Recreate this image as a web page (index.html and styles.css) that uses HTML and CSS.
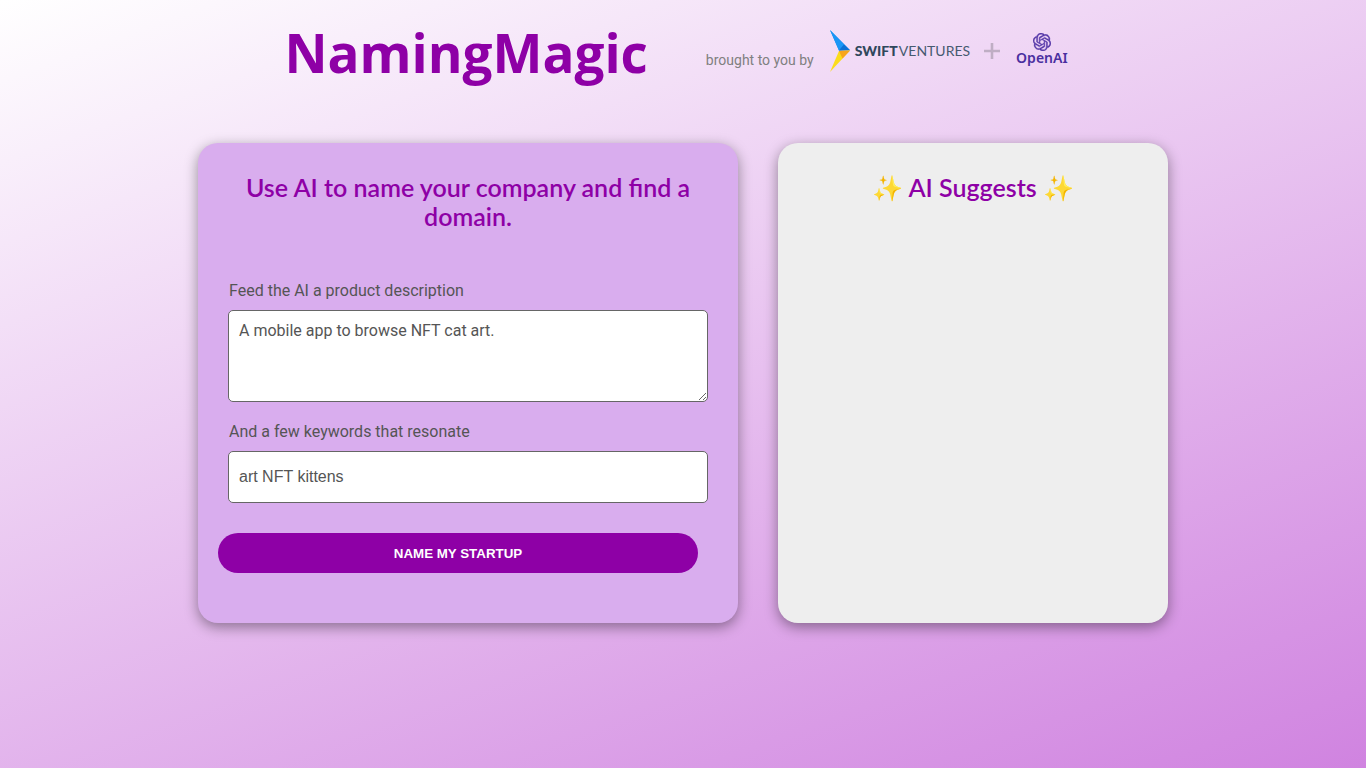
FILE: index.html
```html
<!DOCTYPE html>
<html lang="en">
<head>
    <meta charset="UTF-8">
    <meta name="viewport" content="width=device-width, initial-scale=1.0">
    <title>NamingMagic</title>
    <link rel="stylesheet" href="styles.css">
</head>
<body>

    <header class="header">
        <h1 class="title">NamingMagic</h1>
        <div class="sponsors">
            <span class="brought">brought to you by</span>
            <a class="swift" href="#">
                <svg class="swift-mark" viewBox="0 0 20 42" aria-hidden="true">
                    <polygon points="0,0 20,20 9,20.5" fill="#0b84ee"/>
                    <polygon points="0,0 14,14.5 9,20.5" fill="#1a96f5"/>
                    <polygon points="9,20.5 14,14.5 20,20.5" fill="#0b70d4"/>
                    <polygon points="0,42 9,21 20,20.5" fill="#fbdc1c"/>
                    <polygon points="9,21 20,20.5 12.5,28.5" fill="#f7a51c"/>
                </svg>
                <span class="swift-name"><strong>SWIFT</strong> VENTURES</span>
            </a>
            <svg class="plus" viewBox="0 0 16 16" aria-hidden="true">
                <path d="M8 0V16M0 8H16" stroke="#bfaec4" stroke-width="2.6" fill="none"/>
            </svg>
            <a class="openai" href="#">
                <svg class="openai-mark" viewBox="0 0 24 24" aria-hidden="true">
                    <path fill="#5538a8" stroke="#5538a8" stroke-width="0.5" d="M22.2819 9.8211a5.9847 5.9847 0 0 0-.5157-4.9108 6.0462 6.0462 0 0 0-6.5098-2.9A6.0651 6.0651 0 0 0 4.9807 4.1818a5.9847 5.9847 0 0 0-3.9977 2.9 6.0462 6.0462 0 0 0 .7427 7.0966 5.98 5.98 0 0 0 .511 4.9107 6.051 6.051 0 0 0 6.5146 2.9001A5.9847 5.9847 0 0 0 13.2599 24a6.0557 6.0557 0 0 0 5.7718-4.2058 5.9894 5.9894 0 0 0 3.9977-2.9001 6.0557 6.0557 0 0 0-.7475-7.0729zm-9.022 12.6081a4.4755 4.4755 0 0 1-2.8764-1.0408l.1419-.0804 4.7783-2.7582a.7948.7948 0 0 0 .3927-.6813v-6.7369l2.02 1.1686a.071.071 0 0 1 .038.052v5.5826a4.504 4.504 0 0 1-4.4945 4.4944zm-9.6607-4.1254a4.4708 4.4708 0 0 1-.5346-3.0137l.142.0852 4.783 2.7582a.7712.7712 0 0 0 .7806 0l5.8428-3.3685v2.3324a.0804.0804 0 0 1-.0332.0615L9.74 19.9502a4.4992 4.4992 0 0 1-6.1408-1.6464zM2.3408 7.8956a4.485 4.485 0 0 1 2.3655-1.9728V11.6a.7664.7664 0 0 0 .3879.6765l5.8144 3.3543-2.0201 1.1685a.0757.0757 0 0 1-.071 0l-4.8303-2.7865A4.504 4.504 0 0 1 2.3408 7.872zm16.5963 3.8558L13.1038 8.364 15.1192 7.2a.0757.0757 0 0 1 .071 0l4.8303 2.7913a4.4944 4.4944 0 0 1-.6765 8.1042v-5.6772a.79.79 0 0 0-.407-.667zm2.0107-3.0231l-.142-.0852-4.7735-2.7818a.7759.7759 0 0 0-.7854 0L9.409 9.2297V6.8974a.0662.0662 0 0 1 .0284-.0615l4.8303-2.7866a4.4992 4.4992 0 0 1 6.6802 4.66zM8.3065 12.863l-2.02-1.1638a.0804.0804 0 0 1-.038-.0567V6.0742a4.4992 4.4992 0 0 1 7.3757-3.4537l-.142.0805L8.704 5.459a.7948.7948 0 0 0-.3927.6813zm1.0976-2.3654l2.602-1.4998 2.6069 1.4998v2.9994l-2.5974 1.4997-2.6067-1.4997Z"/>
                </svg>
                <span class="openai-name">OpenAI</span>
            </a>
        </div>
    </header>

    <main class="cards">
        <section class="card form-card">
            <h2>Use AI to name your company and find a domain.</h2>
            <form>
                <label for="description">Feed the AI a product description</label>
                <textarea id="description">A mobile app to browse NFT cat art.</textarea>
                <label for="keywords">And a few keywords that resonate</label>
                <input type="text" id="keywords" value="art NFT kittens">
                <button type="submit" class="btn">NAME MY STARTUP</button>
            </form>
        </section>
        <section class="card result-card">
            <h2>✨ AI Suggests ✨</h2>
        </section>
    </main>

</body>
</html>
```
FILE: styles.css
```css
* {
    box-sizing: border-box;
}

body {
    margin: 0;
    min-height: 100vh;
    font-family: Roboto, sans-serif;
    color: #555;
    background: linear-gradient(160deg, #ffffff 0%, #d083e0 100%);
}

.header {
    display: flex;
    justify-content: center;
    gap: 58px;
    padding: 28px 14px 0 0;
}

.title {
    margin: 0;
    font-family: "Open Sans", sans-serif;
    font-size: 53px;
    font-weight: 700;
    line-height: 50px;
    color: #8e00a6;
}

.sponsors {
    display: flex;
    align-items: flex-start;
}

.brought {
    margin: 22px 16px 0 0;
    font-size: 14px;
    line-height: 20px;
    color: #808080;
}

.swift {
    display: flex;
    align-items: center;
    gap: 5px;
    padding-top: 2px;
    color: #465a70;
    text-decoration: none;
}

.swift-mark {
    width: 20px;
    height: 42px;
}

.swift-name {
    font-family: Lato, sans-serif;
    font-size: 14px;
    line-height: 20px;
}

.swift-name strong {
    margin-right: -2px;
    font-weight: 900;
    color: #2f475c;
}

.plus {
    width: 16px;
    height: 16px;
    margin: 15px 16px 0 14px;
}

.openai {
    display: flex;
    flex-direction: column;
    align-items: center;
    padding-top: 5px;
    color: #4a2fa0;
    text-decoration: none;
}

.openai-mark {
    width: 18px;
    height: 18px;
}

.openai-name {
    font-family: "Noto Sans", sans-serif;
    font-size: 14px;
    font-weight: 600;
    line-height: 14px;
}

.cards {
    display: grid;
    grid-template-columns: 54fr 39fr;
    gap: 40px;
    margin: 65px auto 0;
    padding-bottom: 40px;
    max-width: 970px;
}

.card {
    min-height: 480px;
    padding: 30px 20px;
    border-radius: 20px;
    box-shadow: 0 4px 14px rgba(0, 0, 0, 0.4);
}

.form-card {
    background: #d9adee;
}

.result-card {
    background: #eeeeee;
}

h2 {
    margin: 0;
    font-family: Lato, sans-serif;
    font-size: 25px;
    font-weight: 600;
    line-height: 29px;
    text-align: center;
    color: #8e00a6;
}

form {
    display: flex;
    flex-direction: column;
    margin-top: 49px;
}

label {
    padding-left: 11px;
    font-size: 16px;
    line-height: 22px;
}

textarea,
input {
    margin: 8px 10px 19px;
    padding: 10px;
    border: 1px solid #666;
    border-radius: 5px;
    background: #ffffff;
    color: #555;
    font-size: 16px;
}

textarea {
    height: 92px;
    font-family: Roboto, sans-serif;
}

input {
    height: 52px;
    margin-bottom: 30px;
    font-family: "Liberation Sans", sans-serif;
}

.btn {
    height: 40px;
    margin-right: 20px;
    border: none;
    border-radius: 20px;
    background: #8e00a6;
    color: white;
    font-family: "Liberation Sans", sans-serif;
    font-weight: bold;
    cursor: pointer;
}

.btn:hover {
    background: #74008a;
}
```
